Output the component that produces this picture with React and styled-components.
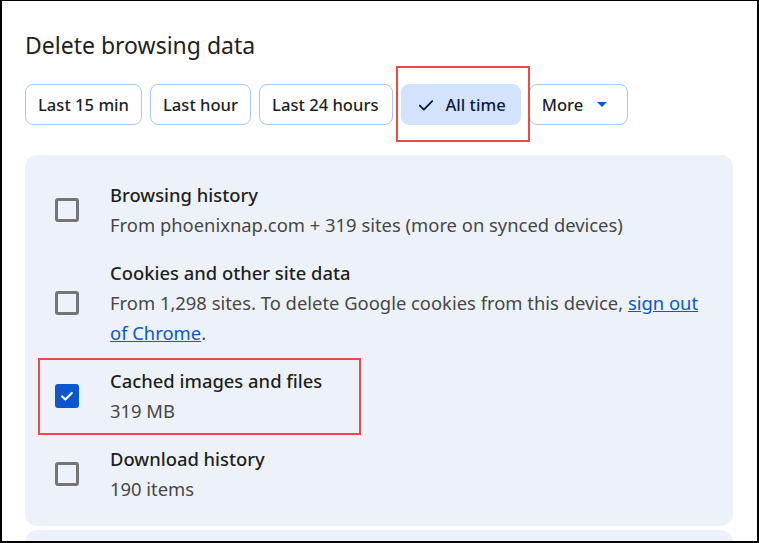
import React from 'react'
import styled, { createGlobalStyle } from 'styled-components'

const GlobalStyle = createGlobalStyle`
  html, body {
    margin: 0;
    padding: 0;
    background: #fff;
  }
  body {
    font-family: "Noto Sans", "Open Sans", sans-serif;
    color: #1f1f1f;
  }
`

const Frame = styled.div`
  width: 759px;
  height: 543px;
  box-sizing: border-box;
  border: 2px solid #000;
  border-top-width: 1px;
  overflow: hidden;
  padding: 29px 24px 0 23px;
  background: #fff;
`

const Title = styled.h1`
  margin: 0;
  font-size: 23px;
  font-weight: 400;
  line-height: 30px;
  color: #1f1f1f;
`

const ChipRow = styled.div`
  display: flex;
  gap: 8px;
  margin-top: 24px;
`

const ChipWrap = styled.div`
  position: relative;
`

const Highlight = styled.div`
  position: absolute;
  inset: -18px -9px -17px -5px;
  border: 2px solid #f04848;
  pointer-events: none;
`

const Chip = styled.button`
  display: flex;
  align-items: center;
  gap: 10px;
  height: 41px;
  box-sizing: border-box;
  padding: 0 ${p => p.$right || '12px'} 0 ${p => p.$left || '12px'};
  border-radius: 8px;
  border: 1px solid ${p => (p.$selected ? '#d3e3fd' : '#a8c7fa')};
  background: ${p => (p.$selected ? '#d3e3fd' : '#fff')};
  color: ${p => (p.$selected ? '#0a1c3d' : '#1f1f1f')};
  font-family: inherit;
  font-size: 16.6px;
  font-weight: 500;
  cursor: pointer;
`

const Caret = styled.span`
  width: 0;
  height: 0;
  margin-left: 4px;
  border-left: 5px solid transparent;
  border-right: 5px solid transparent;
  border-top: 5px solid #0b57d0;
`

const Panel = styled.div`
  margin-top: 30px;
  background: #edf2fa;
  border-radius: 12px;
  padding: 16px 0 13px;
  width: 708px;
`

const NextPanel = styled.div`
  margin-top: 4px;
  height: 40px;
  width: 708px;
  background: #edf2fa;
  border-radius: 12px 12px 0 0;
`

const Row = styled.div`
  position: relative;
  display: flex;
  align-items: center;
  padding: 9px 0 9px 30px;
`

const RowHighlight = styled.div`
  position: absolute;
  left: 13px;
  top: 1px;
  width: 319px;
  height: 73px;
  border: 2px solid #f04848;
  pointer-events: none;
`

const Box = styled.span`
  flex: none;
  width: 24px;
  height: 24px;
  box-sizing: border-box;
  border-radius: 3px;
  border: ${p => (p.$checked ? 'none' : '3px solid #757575')};
  background: ${p => (p.$checked ? '#0b57d0' : 'transparent')};
  display: flex;
  align-items: center;
  justify-content: center;
`

const Text = styled.div`
  margin-left: 31px;
  font-size: 18.4px;
  line-height: 30px;
`

const Label = styled.div`
  color: #1f1f1f;
  font-weight: 500;
`

const Sub = styled.div`
  color: #474747;
  padding-right: 30px;
`

const Link = styled.a`
  color: #0b57d0;
  text-decoration: underline;
`

const CheckMark = ({ color = '#fff', size = 14, width = 2.4 }) => (
  <svg width={size} height={size} viewBox="0 0 16 16" fill="none">
    <path d="M2.5 8.5l3.6 3.6L13.5 4.5" stroke={color} strokeWidth={width} strokeLinecap="round" strokeLinejoin="round" />
  </svg>
)

function Item({ checked, label, children, marked }) {
  return (
    <Row>
      {marked && <RowHighlight />}
      <Box $checked={checked}>{checked && <CheckMark />}</Box>
      <Text>
        <Label>{label}</Label>
        <Sub>{children}</Sub>
      </Text>
    </Row>
  )
}

export default function App() {
  return (
    <>
      <GlobalStyle />
      <Frame>
        <Title>Delete browsing data</Title>
        <ChipRow>
          <Chip>Last 15 min</Chip>
          <Chip>Last hour</Chip>
          <Chip $right="14px">Last 24 hours</Chip>
          <ChipWrap>
            <Highlight />
            <Chip $selected $left="15px" $right="14px">
              <CheckMark color="#0a1c3d" size={18} width={1.6} />
              All time
            </Chip>
          </ChipWrap>
          <Chip $right="20px">
            More
            <Caret />
          </Chip>
        </ChipRow>
        <Panel>
          <Item label="Browsing history">
            From phoenixnap.com + 319 sites (more on synced devices)
          </Item>
          <Item label="Cookies and other site data">
            From 1,298 sites. To delete Google cookies from this device, <Link>sign out</Link>{' '}
            <Link>of Chrome</Link>.
          </Item>
          <Item checked marked label="Cached images and files">
            319 MB
          </Item>
          <Item label="Download history">190 items</Item>
        </Panel>
        <NextPanel />
      </Frame>
    </>
  )
}
